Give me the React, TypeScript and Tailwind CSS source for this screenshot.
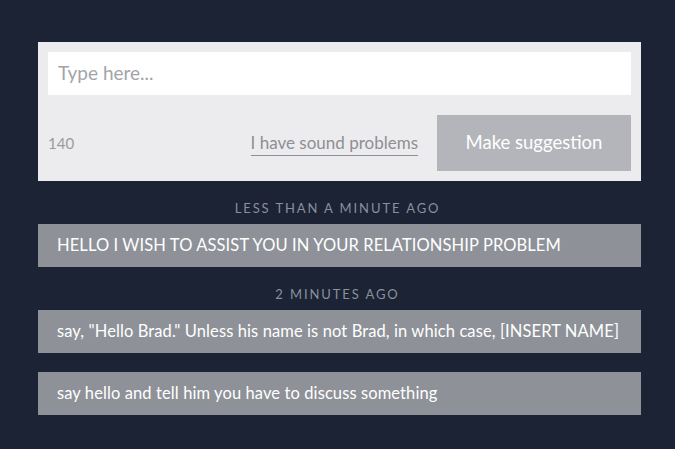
import React from "react";

const messages = [
  {
    label: "Less than a minute ago",
    items: ["HELLO I WISH TO ASSIST YOU IN YOUR RELATIONSHIP PROBLEM"],
  },
  {
    label: "2 minutes ago",
    items: [
      'say, "Hello Brad." Unless his name is not Brad, in which case, [INSERT NAME]',
      "say hello and tell him you have to discuss something",
    ],
  },
];

export default function App() {
  return (
    <div
      className="min-h-screen w-full bg-[#1b2335] px-[38px] pt-[42px] pb-8"
      style={{ fontFamily: "Lato, 'Open Sans', sans-serif" }}
    >
      <div className="w-[603px] bg-[#ececee] p-[10px]">
        <div className="h-[43px] bg-white px-[10px] flex items-center">
          <span className="text-[19px] text-[#a3a4a8]">Type here...</span>
        </div>
        <div className="mt-5 flex items-center h-[56px]">
          <span className="text-[15px] text-[#9a9ba0]">140</span>
          <span className="ml-auto mr-[19px] text-[17px] text-[#8d8f95] border-b border-[#8d8f95] leading-[20px] pb-[2px] mt-[2px]">
            I have sound problems
          </span>
          <button className="w-[194px] h-[56px] bg-[#b3b5bb] text-white text-[18.5px]">
            Make suggestion
          </button>
        </div>
      </div>

      {messages.map((group) => (
        <div key={group.label}>
          <div className="pt-[20px] pb-[9px] leading-[14px] text-center text-[13px] uppercase tracking-[1.9px] text-[#8a909c]">
            {group.label}
          </div>
          <div className="flex flex-col gap-[19px]">
            {group.items.map((m) => (
              <div
                key={m}
                className="w-[603px] h-[43px] bg-[#8e9198] text-white text-[16.5px] tracking-[0.1px] px-[19px] flex items-center"
              >
                {m}
              </div>
            ))}
          </div>
        </div>
      ))}
    </div>
  );
}
